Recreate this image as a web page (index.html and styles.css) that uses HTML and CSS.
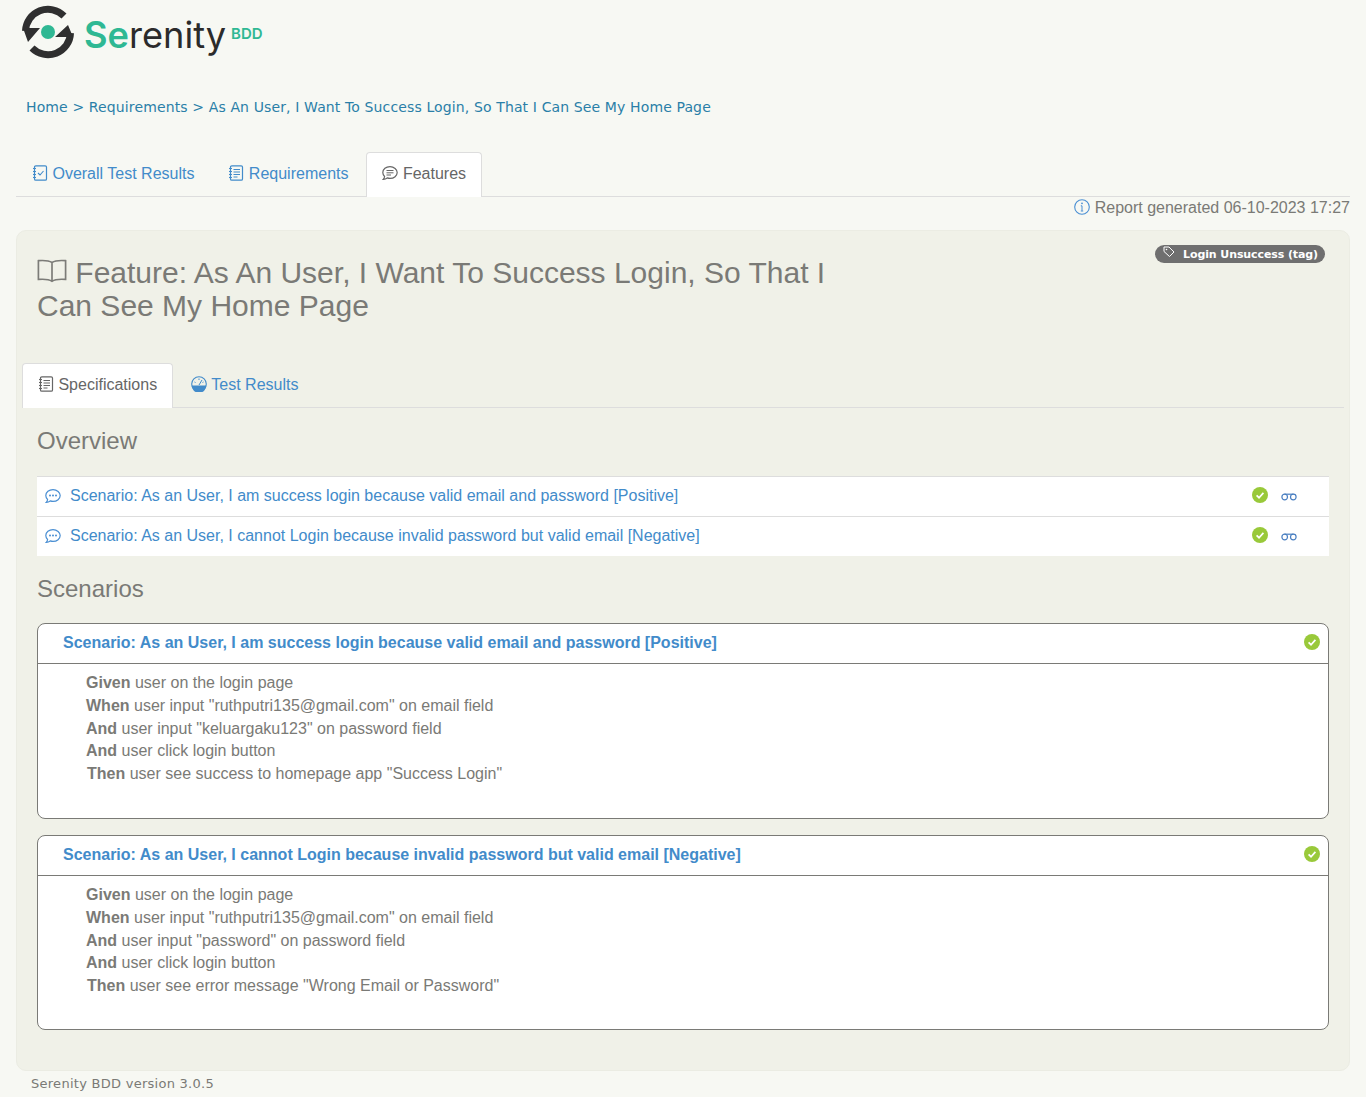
FILE: index.html
```html
<!DOCTYPE html>
<html lang="en">
  <head>
    <meta charset="UTF-8" />
    <title>Serenity Reports</title>
    <link rel="stylesheet" href="styles.css">
  </head>
  <body>
    <svg width="0" height="0" class="defs">
      <symbol id="i-check" viewBox="0 0 16 16">
        <circle cx="8" cy="8" r="8" fill="#99c93a" />
        <path d="M4.6 8.3l2.4 2.4 4.4-4.8" fill="none" stroke="#fff" stroke-width="1.7" />
      </symbol>
      <symbol id="i-glasses" viewBox="0 0 16 8">
        <circle cx="3.7" cy="4" r="2.8" fill="none" stroke="#4a7fc1" stroke-width="1.2" />
        <circle cx="12.3" cy="4" r="2.8" fill="none" stroke="#4a7fc1" stroke-width="1.2" />
        <path d="M3.500 1.200h9" fill="none" stroke="#4a7fc1" stroke-width="1.2" />
      </symbol>
      <symbol id="i-dots" viewBox="0 0 16 16">
        <path d="M8 1.600c-4 0-7.200 2.600-7.200 6 0 1.500.7 2.900 1.800 3.900-.1 1.100-.6 2-1.300 2.800 1.500-.1 2.800-.6 3.900-1.400.9.300 1.800.5 2.800.5 4 0 7.200-2.700 7.200-5.800S12 1.600 8 1.600z" fill="none" stroke="#4a8fd3" stroke-width="1.200" />
        <circle cx="5" cy="7.600" r="1" fill="#4a8fd3" />
        <circle cx="8" cy="7.600" r="1" fill="#4a8fd3" />
        <circle cx="11" cy="7.600" r="1" fill="#4a8fd3" />
      </symbol>
      <symbol id="i-notebook" viewBox="0 0 16 16">
        <rect x="2.500" y=".8" width="12" height="14.400" rx="1.300" fill="none" stroke="currentColor" stroke-width="1.200" />
        <path d="M5.500 4.500h6.500M5.500 7h6.500M5.500 9.500h6.500M5.500 12h4M1 3.500h3M1 6.500h3M1 9.500h3M1 12.500h3" fill="none" stroke="currentColor" stroke-width="1.100" />
      </symbol>
    </svg>

    <header class="logo">
      <svg class="logo-mark" width="54" height="54" viewBox="0 0 54 54">
        <path d="M4.500 26A22.500 22.500 0 0 1 43 11" fill="none" stroke="#2f2f2f" stroke-width="7" />
        <path d="M49.500 28A22.500 22.500 0 0 1 11 43" fill="none" stroke="#2f2f2f" stroke-width="7" />
        <path d="M2 23h17L7 37zM34 32h18l-5-12z" fill="#2f2f2f" />
        <circle cx="27" cy="27" r="7" fill="#2fb893" />
      </svg>
      <span class="logo-name"><b>Se</b>renity</span>
      <span class="logo-bdd">BDD</span>
    </header>

    <nav class="crumbs">
      <a href="#">Home</a> &gt; <a href="#">Requirements</a> &gt; <a href="#">As An User, I Want To Success Login, So That I Can See My Home Page</a>
    </nav>

    <ul class="tabs top-tabs">
      <li>
        <a href="#">
          <svg class="tab-icon" viewBox="0 0 16 16">
            <rect x="2.500" y=".8" width="12" height="14.400" rx="1.300" fill="none" stroke="currentColor" stroke-width="1.200" />
            <path d="M1 3.500h3M1 6.500h3M1 9.500h3M1 12.500h3M6 8l2 2 3.500-4" fill="none" stroke="currentColor" stroke-width="1.100" />
          </svg>
          Overall Test Results
        </a>
      </li>
      <li>
        <a href="#"><svg class="tab-icon"><use href="#i-notebook" /></svg> Requirements</a>
      </li>
      <li class="active">
        <a href="#">
          <svg class="tab-icon" viewBox="0 0 16 16">
            <path d="M8 1.600c-4 0-7.200 2.600-7.200 6 0 1.500.7 2.900 1.800 3.900-.1 1.100-.6 2-1.300 2.800 1.500-.1 2.800-.6 3.900-1.400.9.300 1.800.5 2.800.5 4 0 7.200-2.700 7.200-5.800S12 1.600 8 1.600z" fill="none" stroke="currentColor" stroke-width="1.200" />
            <path d="M4.500 5.500h7M4.500 7.800h7M4.500 10h4.500" fill="none" stroke="currentColor" />
          </svg>
          Features
        </a>
      </li>
    </ul>

    <p class="generated">
      <svg class="info" viewBox="0 0 16 16">
        <circle cx="8" cy="8" r="7.300" fill="none" stroke="#4a8fd3" stroke-width="1.100" />
        <path d="M8 6.800v5M6.800 12h2.400M6.800 6.800H8" fill="none" stroke="#4a8fd3" />
        <circle cx="8" cy="4.300" r=".9" fill="#4a8fd3" />
      </svg>
      Report generated 06-10-2023 17:27
    </p>

    <main class="panel">
      <div class="title-row">
        <h1>
          <svg class="book" viewBox="0 0 32 26">
            <path d="M16 4C13 2 8 1.500 1.500 2v20c6.500-.5 11.500 0 14.500 2 3-2 8-2.500 14.500-2V2C24 1.500 19 2 16 4zM16 4v20" fill="none" stroke="#7c7c78" stroke-width="1.800" />
          </svg>
          Feature: As An User, I Want To Success Login, So That I Can See My Home Page
        </h1>
        <span class="tag">
          <svg class="tag-icon" viewBox="0 0 12 12">
            <path d="M1 1h5l5 5-4.500 4.500-5.500-5z" fill="none" stroke="#fff" />
            <circle cx="3.500" cy="3.500" r=".8" fill="#fff" />
          </svg>
          Login Unsuccess (tag)
        </span>
      </div>

      <ul class="tabs inner-tabs">
        <li class="active">
          <a href="#"><svg class="tab-icon"><use href="#i-notebook" /></svg> Specifications</a>
        </li>
        <li>
          <a href="#">
            <svg class="tab-icon" viewBox="0 0 16 16">
              <circle cx="8" cy="8" r="7.300" fill="none" stroke="currentColor" stroke-width="1.100" />
              <path d="M.7 9.500h14.600a7.300 7.300 0 0 1-14.600 0z" fill="currentColor" />
              <path d="M8 9l3-5M3.500 6l1 .5M8 2.500v1.500M12.500 6l-1 .5" fill="none" stroke="currentColor" />
            </svg>
            Test Results
          </a>
        </li>
      </ul>

      <section class="content">
        <h2 class="overview-title">Overview</h2>
        <table class="overview">
          <tr>
            <td class="scenario-name"><svg class="dots"><use href="#i-dots" /></svg><a href="#">Scenario: As an User, I am success login because valid email and password [Positive]</a></td>
            <td class="status"><svg class="check"><use href="#i-check" /></svg></td>
            <td class="view"><svg class="glasses"><use href="#i-glasses" /></svg></td>
          </tr>
          <tr>
            <td class="scenario-name"><svg class="dots"><use href="#i-dots" /></svg><a href="#">Scenario: As an User, I cannot Login because invalid password but valid email [Negative]</a></td>
            <td class="status"><svg class="check"><use href="#i-check" /></svg></td>
            <td class="view"><svg class="glasses"><use href="#i-glasses" /></svg></td>
          </tr>
        </table>

        <h2 class="scenarios-title">Scenarios</h2>

        <article class="card">
          <div class="card-head">
            <a href="#">Scenario: As an User, I am success login because valid email and password [Positive]</a>
            <svg class="check"><use href="#i-check" /></svg>
          </div>
          <div class="card-body">
            <b>Given</b> user on the login page<br>
            <b>When</b> user input "ruthputri135@gmail.com" on email field<br>
            <b>And</b> user input "keluargaku123" on password field<br>
            <b>And</b> user click login button<br>
            <b class="then">Then</b> user see success to homepage app "Success Login"
          </div>
        </article>

        <article class="card">
          <div class="card-head">
            <a href="#">Scenario: As an User, I cannot Login because invalid password but valid email [Negative]</a>
            <svg class="check"><use href="#i-check" /></svg>
          </div>
          <div class="card-body">
            <b>Given</b> user on the login page<br>
            <b>When</b> user input "ruthputri135@gmail.com" on email field<br>
            <b>And</b> user input "password" on password field<br>
            <b>And</b> user click login button<br>
            <b class="then">Then</b> user see error message "Wrong Email or Password"
          </div>
        </article>
      </section>
    </main>

    <footer class="version">Serenity BDD version 3.0.5</footer>
  </body>
</html>
```

FILE: styles.css
```css
body {
  margin: 0;
  padding: 0 16px;
  background-color: #f7f8f3;
  color: #7a7a76;
  font-family: "Liberation Sans", Arial, sans-serif;
  font-size: 16px;
}

a {
  color: #428bca;
  text-decoration: none;
}

.defs {
  display: block;
  height: 0;
}

/* logo */
.logo {
  display: flex;
  align-items: flex-start;
  height: 71px;
  padding: 5px 0 0 5px;
  box-sizing: border-box;
}

.logo-name {
  margin: 9px 0 0 9px;
  font-family: Inter, sans-serif;
  font-size: 36.200px;
  line-height: 42px;
  color: #2b2b2b;
}

.logo-name b {
  font-weight: 600;
  color: #2fb893;
}

.logo-bdd {
  margin: 19px 0 0 5px;
  font-family: Inter, sans-serif;
  font-size: 15px;
  font-weight: 600;
  line-height: 20px;
  color: #2fb893;
}

/* breadcrumbs */
.crumbs {
  padding: 0 0 0 10px;
  height: 81px;
  font-family: "DejaVu Sans", Verdana, sans-serif;
  font-size: 14px;
  letter-spacing: 0.125px;
  line-height: 72px;
  color: #2a7fa8;
}

.crumbs a {
  color: #2a7fa8;
}

/* tabs */
.tabs {
  display: flex;
  margin: 0;
  padding: 0;
  list-style: none;
  border-bottom: 1px solid #dddddd;
}

.tabs li {
  margin-bottom: -1px;
  margin-right: 2px;
}

.tabs a {
  display: block;
  height: 44px;
  padding: 0 15px;
  border: 1px solid transparent;
  border-bottom: 0;
  border-radius: 4px 4px 0 0;
  line-height: 42px;
}

.tabs .active a {
  background-color: #ffffff;
  border-color: #dddddd;
  color: #666666;
}

.top-tabs {
  height: 44px;
}

.inner-tabs {
  margin: 0 5px;
  height: 44px;
}

.tab-icon {
  width: 16px;
  height: 16px;
  vertical-align: -2px;
}

/* report date */
.generated {
  margin: 0;
  height: 34px;
  font-size: 16px;
  line-height: 22px;
  text-align: right;
}

.info {
  width: 16px;
  height: 16px;
  vertical-align: -2px;
}

/* main panel */
.panel {
  height: 841px;
  margin-top: -1px;
  box-sizing: border-box;
  border: 1px solid #ebece3;
  border-radius: 10px;
  background-color: #f0f1e8;
}

.title-row {
  display: flex;
  justify-content: space-between;
  align-items: flex-start;
  height: 118px;
  padding: 14px 24px 0 20px;
}

h1 {
  width: 810px;
  margin: 11px 0 0;
  font-size: 30px;
  font-weight: 400;
  line-height: 33px;
}

.book {
  width: 30px;
  height: 26px;
  vertical-align: -1px;
}

.tag {
  height: 18px;
  padding: 0 7px 0 8px;
  border-radius: 10px;
  background-color: #6f6f6f;
  color: #ffffff;
  font-family: "DejaVu Sans", Verdana, sans-serif;
  font-size: 11px;
  font-weight: 700;
  letter-spacing: -0.1px;
  line-height: 19px;
}

.tag-icon {
  width: 12px;
  height: 12px;
  margin-right: 4px;
  vertical-align: 0;
}

.content {
  padding: 0 20px;
}

h2 {
  margin: 0;
  font-size: 24px;
  font-weight: 400;
  line-height: 26px;
}

.overview-title {
  padding: 20px 0 22px;
}

.overview {
  width: 100%;
  border-collapse: collapse;
  background-color: #ffffff;
}

.overview td {
  height: 37px;
  padding: 0 0 2px;
  border-top: 1px solid #dddddd;
}

.scenario-name {
  padding-left: 8px !important;
}

.dots {
  width: 16px;
  height: 16px;
  margin-right: 9px;
  vertical-align: -3px;
}

.status {
  width: 29px;
  text-align: left;
}

.view {
  width: 48px;
}

.check {
  display: inline-block;
  width: 16px;
  height: 16px;
  vertical-align: -2px;
}

.card-head .check {
  margin-bottom: 1px;
}

.glasses {
  width: 16px;
  height: 8px;
}

.scenarios-title {
  padding: 20px 0 21px;
}

.card {
  height: 196px;
  box-sizing: border-box;
  margin-bottom: 16px;
  border: 1px solid #7a7a76;
  border-radius: 8px;
  background-color: #ffffff;
}

.card + .card {
  height: 195px;
}

.card-head {
  display: flex;
  justify-content: space-between;
  align-items: center;
  height: 37px;
  padding: 0 8px 2px 25px;
  border-bottom: 1px solid #7a7a76;
  font-weight: 700;
}

.card-body {
  padding: 8px 48px;
  line-height: 22.750px;
}

.then {
  margin-left: 1px;
}

/* footer */
.version {
  padding-left: 15px;
  font-family: "DejaVu Sans", Verdana, sans-serif;
  font-size: 13px;
  letter-spacing: 0.27px;
  line-height: 25px;
}
```
